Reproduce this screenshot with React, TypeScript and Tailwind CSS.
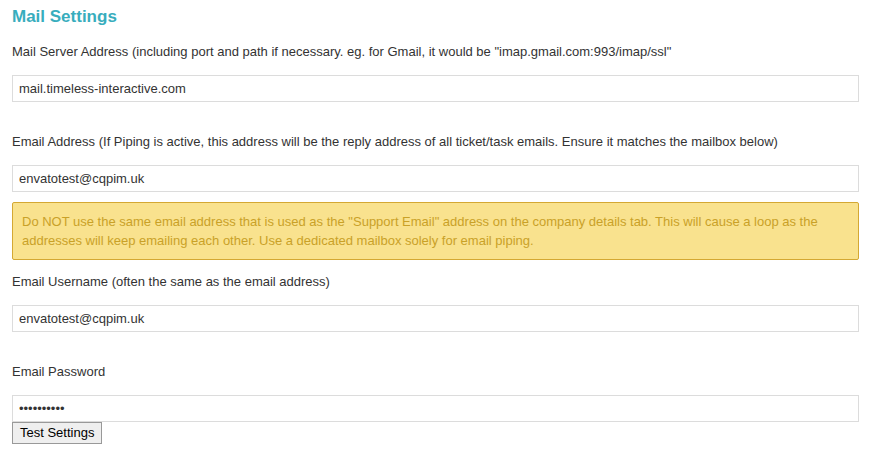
import React from "react";

function Field({ label, value, type = "text" }: { label: string; value: string; type?: string }) {
  return (
    <div>
      <p className="mb-[14px] leading-[18px]">{label}</p>
      <input
        type={type}
        defaultValue={value}
        className="block w-full h-[27px] border border-[#dcdcdc] bg-white px-[6px] text-[13px] text-[#333] outline-none"
      />
    </div>
  );
}

export default function App() {
  return (
    <div className="bg-white min-h-screen pl-[12px] pr-[15px] pt-[7px] text-[13px] text-[#333] font-['Liberation_Sans',Arial,sans-serif]">
      <h1 className="text-[17px] font-bold text-[#38adbd] leading-[20px] mb-[16px]">Mail Settings</h1>

      <div className="flex flex-col">
        <Field
          label={'Mail Server Address (including port and path if necessary. eg. for Gmail, it would be "imap.gmail.com:993/imap/ssl"'}
          value="mail.timeless-interactive.com"
        />
        <div className="h-[31px]" />
        <Field
          label="Email Address (If Piping is active, this address will be the reply address of all ticket/task emails. Ensure it matches the mailbox below)"
          value="envatotest@cqpim.uk"
        />
        <div className="mt-[10px] mb-[13px] rounded-[2px] border border-[#d4a833] bg-[#f9e28e] px-[9px] py-[9px] leading-[19px] text-[#c9a128]">
          Do NOT use the same email address that is used as the "Support Email" address on the company details tab. This will cause a loop as the addresses will keep emailing each other. Use a dedicated mailbox solely for email piping.
        </div>
        <Field label="Email Username (often the same as the email address)" value="envatotest@cqpim.uk" />
        <div className="h-[31px]" />
        <Field label="Email Password" value="mailpasswd" type="password" />
        <div>
          <button className="h-[22px] border border-[#999] bg-[#efefef] px-[7px] text-[13px] text-black leading-[18px] font-['Liberation_Sans',Arial,sans-serif]">
            Test Settings
          </button>
        </div>
      </div>
    </div>
  );
}
